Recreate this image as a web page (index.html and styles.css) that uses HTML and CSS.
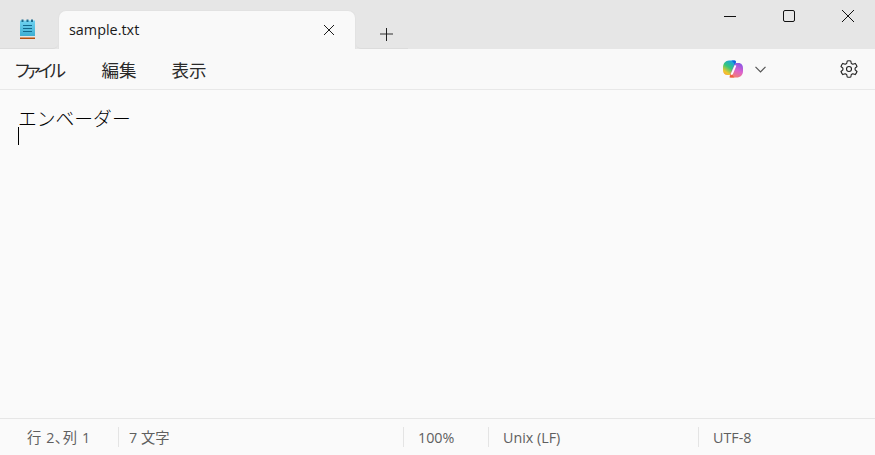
FILE: index.html
```html
<!DOCTYPE html>
<html lang="ja">
<head>
<meta charset="utf-8">
<title>sample.txt</title>
<link rel="stylesheet" href="styles.css">
</head>
<body>
<div class="app">
  <header class="titlebar">
    <div class="app-icon">
      <svg width="18" height="21" viewBox="0 0 18 21">
        <defs><linearGradient id="pad" x1="0" y1="0" x2="0" y2="1"><stop offset="0" stop-color="#6fd3f2"/><stop offset="1" stop-color="#3eaed2"/></linearGradient></defs>
        <rect x="1" y="1.500" width="15" height="15.500" fill="url(#pad)"/>
        <rect x="1" y="17" width="15" height="1.500" fill="#e8e4df"/>
        <rect x="1" y="18.500" width="15" height="1.500" fill="#b5500f"/>
        <rect x="2.500" y="0.500" width="2" height="2.500" fill="#1d6d8f"/><rect x="7.500" y="0.500" width="2" height="2.500" fill="#1d6d8f"/><rect x="12" y="0.500" width="2" height="2.500" fill="#1d6d8f"/>
        <path d="M4 6.500h9M4 9.500h9M4 12.500h9" stroke="#12688c" stroke-width="1"/>
      </svg>
    </div>
    <div class="tab">
      <span class="tab-title">sample.txt</span>
      <svg class="tab-close" width="12" height="12" viewBox="0 0 12 12"><path d="M1 1l10 10M11 1L1 11" stroke="#1c1c1c" stroke-width="1"/></svg>
    </div>
    <div class="new-tab">
      <svg width="13" height="13" viewBox="0 0 13 13"><path d="M0 6h13" stroke="#303030" stroke-width="1"/><path d="M6.500 0v13" stroke="#202020" stroke-width="1"/></svg>
    </div>
    <div class="window-controls">
      <div class="win-btn"><svg width="12" height="12" viewBox="0 0 12 12"><path d="M0 6.500h12" stroke="#111" stroke-width="1"/></svg></div>
      <div class="win-btn"><svg width="12" height="12" viewBox="0 0 12 12"><rect x="0.500" y="0.500" width="11" height="11" rx="1.500" fill="none" stroke="#111" stroke-width="1"/></svg></div>
      <div class="win-btn"><svg width="12" height="12" viewBox="0 0 12 12"><path d="M0 0l12 12M12 0L0 12" stroke="#111" stroke-width="1"/></svg></div>
    </div>
  </header>
  <nav class="menubar">
    <span class="menu-item menu-kana">ファイル</span>
    <span class="menu-item">編集</span>
    <span class="menu-item">表示</span>
    <div class="menu-right">
      <svg class="copilot" width="20" height="18" viewBox="0 0 20 18">
        <defs>
          <linearGradient id="cpa" x1="0.700" y1="0" x2="0.100" y2="1"><stop offset="0" stop-color="#1a9cec"/><stop offset="0.450" stop-color="#35c77a"/><stop offset="0.800" stop-color="#f2c62c"/><stop offset="1" stop-color="#f2a03a"/></linearGradient>
          <linearGradient id="cpb" x1="0.700" y1="0" x2="0.300" y2="1"><stop offset="0" stop-color="#8a55e4"/><stop offset="0.500" stop-color="#dc62cc"/><stop offset="1" stop-color="#f5806a"/></linearGradient>
        </defs>
        <path d="M6 0.500H11.500C12.700 0.500 13.200 1.400 12.800 2.400L8.300 13.800C7.900 14.600 7.300 15 6.500 15H4.300C1.800 15 0 13 0 10.500V7.500C0 3.500 2.500 0.500 6 0.500z" fill="url(#cpa)"/>
        <path d="M13.500 3H15.500C18.300 3 20 5.200 20 8.200V11C20 15 17.500 17.500 13.500 17.500H8C6.800 17.500 6.300 16.500 6.800 15.500L11.500 4.600C12 3.500 12.600 3 13.500 3z" fill="url(#cpb)"/>
        <path d="M8.500 0.500H11.500C12.700 0.500 13.200 1.400 12.800 2.400L11.800 5C11.300 3 10.200 1.600 8.500 0.500z" fill="#1262dc"/>
        <path d="M6.500 17.500L8.800 12.500C9.300 14.800 10 16.300 11.500 17.500z" fill="#ef5b3c"/>
        <path d="M7.800 13.800L11.800 5L13.300 5.800L9.800 14.300L8.500 15.200z" fill="#fff"/>
      </svg>
      <svg class="chevron" width="11" height="7" viewBox="0 0 11 7"><path d="M0.500 0.800l5 5 5-5" fill="none" stroke="#555" stroke-width="1.200"/></svg>
      <svg class="gear" width="20" height="20" viewBox="0 0 20 20"><path d="M8.200 1.500C9.400 1.200 10.600 1.200 11.800 1.500L12.300 4 13.800 4.800 16.200 3.900C17 4.800 17.600 5.900 18 7L16.100 8.700V10.300L18 12C17.600 13.200 17 14.200 16.200 15.100L13.800 14.200 12.300 15 11.800 17.500C10.600 17.800 9.400 17.800 8.200 17.500L7.700 15 6.200 14.200 3.800 15.100C3 14.200 2.400 13.200 2 12L3.900 10.300V8.700L2 7C2.400 5.900 3 4.800 3.800 3.900L6.200 4.800 7.700 4z" transform="translate(0 .5)" fill="none" stroke="#222" stroke-width="1.100" stroke-linejoin="round"/><circle cx="10" cy="10" r="2.500" fill="none" stroke="#222" stroke-width="1.100"/></svg>
    </div>
  </nav>
  <main class="editor">
    <div class="line">エンベーダー</div>
    <div class="line"><span class="caret"></span></div>
  </main>
  <footer class="statusbar">
    <div class="cell cell-pos">行 2、列 1</div>
    <div class="cell cell-count">7 文字</div>
    <div class="cell cell-zoom">100%</div>
    <div class="cell cell-eol">Unix (LF)</div>
    <div class="cell cell-enc">UTF-8</div>
  </footer>
</div>
</body>
</html>
```

FILE: styles.css
```css
* { box-sizing: border-box; }
html, body { margin: 0; padding: 0; }
body {
  width: 875px;
  height: 455px;
  overflow: hidden;
  background: #f9f9f9;
  font-family: "Open Sans", "Noto Sans CJK JP", sans-serif;
}
.app { display: flex; flex-direction: column; height: 455px; overflow: hidden; }

.titlebar {
  display: flex;
  height: 49px;
  background: #e6e6e6;
  flex: none;
}
.app-icon {
  width: 58px;
  padding: 19px 0 0 19px;
  border-bottom: 1px solid #dcdcdc;
  border-bottom-right-radius: 5px;
}
.tab {
  width: 298px;
  margin-top: 10px;
  background: #f9f9f9;
  border: 1px solid #e2e2e2;
  border-bottom: 0;
  border-radius: 8px 8px 0 0;
  display: flex;
  align-items: center;
  justify-content: space-between;
  padding: 0 20px 0 10px;
}
.tab-title { font-size: 14.400px; font-weight: 500; color: #1a1a1a; margin-bottom: 2px; }
.tab-close { flex: none; }
.new-tab {
  width: 52px;
  padding: 24px 0 0 24px;
  border-bottom: 1px solid #dcdcdc;
  border-bottom-left-radius: 5px;
}
.window-controls {
  margin-left: auto;
  margin-right: -2.500px;
  display: flex;
  height: 32px;
}
.win-btn {
  width: 59px;
  display: flex;
  align-items: center;
  justify-content: center;
}

.menubar {
  display: flex;
  align-items: center;
  height: 41px;
  flex: none;
  padding-left: 15px;
  gap: 35px;
  background: #f9f9f9;
  border-bottom: 1px solid #e8e8e8;
  font-size: 17.500px;
  font-feature-settings: "palt";
  color: #2a2a2a;
}
.menu-kana { letter-spacing: -3.200px; padding-right: 3.800px; }
.menu-right {
  margin-left: auto;
  display: flex;
  align-items: center;
  padding-right: 16px;
}
.copilot { margin-right: 12px; }
.chevron { margin-right: 73px; }

.editor {
  flex: 1;
  padding: 18px 0 0 18px;
  background: #fafafa;
  font-family: "Noto Sans CJK JP", sans-serif;
  font-size: 18.800px;
  font-weight: 300;
  color: #000;
}
.line { height: 19px; line-height: 19px; }
.caret { display: block; width: 1px; height: 18px; background: #000; }

.statusbar {
  display: flex;
  align-items: center;
  height: 37px;
  flex: none;
  border-top: 1px solid #e6e6e6;
  background: #fafafa;
  font-size: 14.300px;
  font-feature-settings: "palt";
  color: #5f5f5f;
}
.cell {
  height: 20px;
  line-height: 22px;
  padding-left: 14px;
  border-left: 1px solid #e4e4e4;
  white-space: nowrap;
}
.cell-pos { width: 118px; padding-left: 27px; border-left: 0; letter-spacing: 0.600px; }
.cell-count { width: 285px; padding-left: 10px; }
.cell-zoom { width: 85px; }
.cell-eol { width: 210px; }
.cell-enc { flex: 1; }
```
